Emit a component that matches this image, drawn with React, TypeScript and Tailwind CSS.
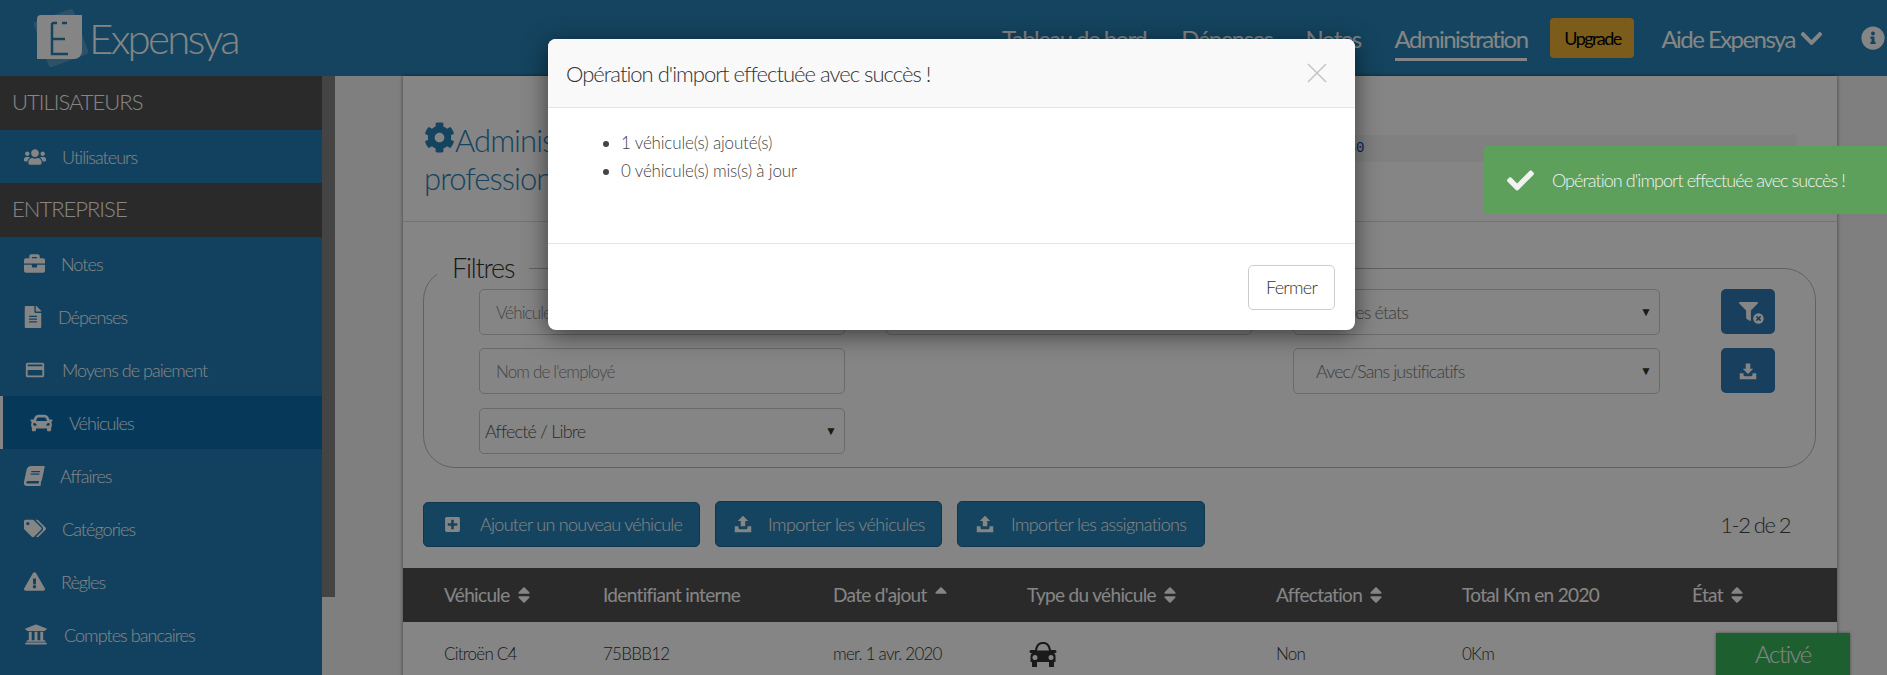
import type { ReactNode } from 'react';
import {
  FaBook, FaBriefcase, FaCar, FaCheck, FaChevronDown, FaCog, FaExclamationTriangle, FaFileAlt,
  FaFilter, FaInfoCircle, FaPlusSquare, FaSort, FaSortUp, FaTags, FaTimesCircle, FaUniversity, FaUsers,
} from 'react-icons/fa';
import { MdCreditCard } from 'react-icons/md';

function TrayIcon({ down = false, className = '' }: { down?: boolean; className?: string }) {
  return (
    <svg viewBox="0 0 24 24" className={className} fill="currentColor">
      <path d={down ? 'M9 2h6v7h4l-7 7-7-7h4z' : 'M12 1l7 7h-4v7H9V8H5z'} />
      <path d="M1 15h5v2a2 2 0 0 0 2 2h8a2 2 0 0 0 2-2v-2h5v8H1z" />
    </svg>
  );
}

function FrontCar({ className = '' }: { className?: string }) {
  return (
    <svg viewBox="0 0 30 26" className={className} fill="currentColor">
      <path fillRule="evenodd" d="M7 9C8 3.500 10.500 1 15 1s7 2.500 8 8h4a1.500 1.500 0 0 1 0 3h-1c1 1 1.500 2 1.500 3.500V21H2.500v-5.500C2.500 14 3 13 4 12H3a1.500 1.500 0 0 1 0-3zM9 9.500h12C20 5 18.500 3 15 3S10 5 9 9.500zM7 14a2.500 2.500 0 1 0 0 5 2.500 2.500 0 0 0 0-5zm16 0a2.500 2.500 0 1 0 0 5 2.500 2.500 0 0 0 0-5z" />
      <path d="M4 21h5v5H4zM21 21h5v5h-5z" />
    </svg>
  );
}

function Logo() {
  return (
    <svg viewBox="0 0 56 62" className="h-[62px] w-[56px] shrink-0">
      <rect x="7" y="7" width="42" height="48" rx="3" fill="#ffffff" opacity="0.22" transform="rotate(-20 28 31)" />
      <path d="M8 8h41v36a8 8 0 0 1-8 8H4V12a4 4 0 0 1 4-4z" fill="#ffffff" />
      <path d="M19 16v31h16M19 32h13M19 16h5M29 16h5" fill="none" stroke="#2883b7" strokeWidth="2.500" />
    </svg>
  );
}

const sideItems: { label: string; icon: ReactNode; active?: boolean }[] = [
  { label: 'Notes', icon: <FaBriefcase className="h-[21px] w-[21px]" /> },
  { label: 'Dépenses', icon: <FaFileAlt className="h-[22px] w-[18px]" /> },
  { label: 'Moyens de paiement', icon: <MdCreditCard className="h-[26px] w-[22px]" /> },
  { label: 'Véhicules', icon: <FaCar className="h-[22px] w-[23px]" />, active: true },
  { label: 'Affaires', icon: <FaBook className="h-[20px] w-[20px] -skew-x-12" /> },
  { label: 'Catégories', icon: <FaTags className="h-[21px] w-[22px]" /> },
  { label: 'Règles', icon: <FaExclamationTriangle className="h-[21px] w-[21px]" /> },
  { label: 'Comptes bancaires', icon: <FaUniversity className="h-[23px] w-[24px]" /> },
];

function SideItem({ label, icon, active }: { label: string; icon: ReactNode; active?: boolean }) {
  return (
    <div className={active
      ? 'flex h-[53px] items-center gap-[16px] border-l-[3px] border-white bg-[#0d6cad] pl-[27px]'
      : 'flex h-[53px] items-center gap-[16px] bg-[#227db7] pl-[24px]'}>
      {icon}
      <span className="pt-[2px]">{label}</span>
    </div>
  );
}

function SideHeading({ children }: { children: ReactNode }) {
  return <div className="flex h-[54px] items-center bg-[#515151] pb-[3px] pl-[12px] text-[22px] tracking-[-0.045em]">{children}</div>;
}

function SelectBox({ label, className = '' }: { label: string; className?: string }) {
  return (
    <div className={`flex h-[46px] items-center justify-between rounded-[5px] border border-[#ccc] pr-[8px] ${className}`}>
      <span>{label}</span>
      <span className="text-[12px] text-[#333]">▼</span>
    </div>
  );
}

function TextField({ placeholder }: { placeholder: string }) {
  return (
    <input
      readOnly
      placeholder={placeholder}
      className="h-[46px] w-[366px] rounded-[5px] border border-[#ccc] px-[16px] text-[17px] tracking-[-0.05em] placeholder:text-[#888]"
    />
  );
}

function ActionButton({ icon, label, className }: { icon: ReactNode; label: string; className: string }) {
  return (
    <button className={`flex items-center rounded-[5px] border border-[#1d6a97] bg-[#2883b7] text-[18px] text-white ${className}`}>
      {icon}
      <span>{label}</span>
    </button>
  );
}

const columns = [
  { label: 'Véhicule', sort: true },
  { label: 'Identifiant interne' },
  { label: "Date d'ajout", up: true },
  { label: 'Type du véhicule', sort: true },
  { label: 'Affectation', sort: true },
  { label: 'Total Km en 2020' },
  { label: 'État', sort: true },
];

const tableGrid = 'grid grid-cols-[159px_230px_194px_249px_186px_230px_1fr] pl-[41px]';

export default function App() {
  return (
    <div className="relative h-[675px] overflow-hidden bg-[#f4f4f4] font-['Lato',sans-serif] font-light tracking-[-0.06em] text-[#333]">
      {/* Top bar */}
      <header className="flex h-[76px] items-center bg-[#2883b7] pl-[33px] pr-[2px] text-[24px] text-white">
        <Logo />
        <span className="text-[42px] leading-none tracking-[-0.065em]">Expensya</span>
        <nav className="ml-auto flex items-center font-normal tracking-[-0.065em]">
          <span className="pt-[2px]">Tableau de bord</span>
          <span className="ml-[35px] pt-[2px]">Dépenses</span>
          <span className="ml-[33px] pt-[2px]">Notes</span>
          <span className="ml-[34px] border-b-[3px] border-white pb-[1px] pt-[5px]">Administration</span>
          <span className="ml-[23px] flex h-[40px] w-[84px] items-center justify-center rounded-[4px] bg-[#ebb132] text-[18px] text-black">Upgrade</span>
          <span className="ml-[27px] pt-[2px]">Aide Expensya</span>
          <FaChevronDown className="ml-[4px] h-[25px] w-[25px]" />
          <FaInfoCircle className="ml-[37px] h-[24px] w-[24px]" />
        </nav>
      </header>

      <div className="flex h-[599px]">
        {/* Sidebar */}
        <aside className="h-full w-[322px] shrink-0 bg-[#227db7] text-[18px] text-white">
          <SideHeading>UTILISATEURS</SideHeading>
          <SideItem label="Utilisateurs" icon={<FaUsers className="h-[22px] w-[22px]" />} />
          <SideHeading>ENTREPRISE</SideHeading>
          {sideItems.map(item => <SideItem key={item.label} {...item} />)}
        </aside>
        <div className="h-full w-[13px] shrink-0">
          <div className="h-[521px] bg-[#838383]" />
        </div>

        {/* Main panel */}
        <main className="ml-[68px] h-[700px] w-[1434px] shrink-0 bg-white shadow-[0_0_4px_rgba(0,0,0,0.5)]">
          <div className="flex h-[146px] border-b border-[#ddd] pr-[40px] pt-[44px]">
            <h1 className="mt-[1px] w-[560px] pl-[21px] text-[31px] leading-[38px] font-light text-[#2883b7]">
              <FaCog className="inline h-[31px] w-[31px] align-[-1px]" />
              Administration des véhicules professionnels
            </h1>
            <code className="ml-auto mt-[15px] h-[27px] w-[745px] rounded-[4px] bg-[#f5f5f5] pl-[10px] font-['Liberation_Mono',monospace] text-[14px] font-normal leading-[27px] tracking-normal text-[#0b3fb5]">
              00000000-0000-0000-0000-000000000080
            </code>
          </div>

          {/* Filters */}
          <fieldset className="ml-[20px] mt-[28px] h-[218px] w-[1393px] rounded-[32px] border border-[#bbb] pl-[55px]">
            <legend className="-ml-[42px] px-[15px] text-[27px] leading-[36px] tracking-[-0.045em] text-[#333]">Filtres</legend>
            <div className="mt-[3px] flex gap-[41px]">
              <TextField placeholder="Véhicule" />
              <TextField placeholder="Identifiant" />
              <SelectBox label="Tous les états" className="w-[367px] pl-[22px] text-[18px] tracking-[-0.05em] text-[#777]" />
              <button className="ml-[20px] flex h-[45px] w-[54px] items-center justify-center rounded-[5px] bg-[#2f7ab5] text-white">
                <span className="relative">
                  <FaFilter className="h-[19px] w-[19px]" />
                  <FaTimesCircle className="absolute -bottom-[4px] -right-[7px] h-[13px] w-[13px] rounded-full border border-[#2f7ab5]" />
                </span>
              </button>
            </div>
            <div className="mt-[13px] flex gap-[41px]">
              <TextField placeholder="Nom de l'employé" />
              <div className="w-[366px]" />
              <SelectBox label="Avec/Sans justificatifs" className="w-[367px] pl-[22px] text-[18px] tracking-[-0.05em] text-[#777]" />
              <button className="ml-[20px] flex h-[45px] w-[54px] items-center justify-center rounded-[5px] bg-[#2f7ab5] text-white">
                <TrayIcon down className="h-[18px] w-[18px]" />
              </button>
            </div>
            <SelectBox label="Affecté / Libre" className="mt-[14px] w-[366px] pl-[5px] text-[18px] tracking-[-0.045em] text-[#555]" />
          </fieldset>

          {/* Actions */}
          <div className="mt-[33px] flex h-[46px] items-center gap-[15px] pl-[20px] pr-[47px]">
            <ActionButton className="h-[45px] w-[277px] gap-[19px] pl-[20px] tracking-[-0.04em]" label="Ajouter un nouveau véhicule" icon={<FaPlusSquare className="h-[17px] w-[17px]" />} />
            <ActionButton className="h-[46px] w-[227px] gap-[16px] pl-[18px] tracking-[-0.03em]" label="Importer les véhicules" icon={<TrayIcon className="h-[18px] w-[18px]" />} />
            <ActionButton className="h-[46px] w-[248px] gap-[17px] pl-[18px] tracking-[-0.035em]" label="Importer les assignations" icon={<TrayIcon className="h-[18px] w-[18px]" />} />
            <span className="ml-auto text-[22px] tracking-[-0.07em] text-[#444]">1-2 de 2</span>
          </div>

          {/* Table */}
          <div className={`mt-[21px] h-[54px] items-center bg-[#515151] text-[19px] font-normal tracking-[-0.035em] text-white ${tableGrid}`}>
            {columns.map(c => (
              <span key={c.label} className="flex items-center gap-[7px]">
                {c.label}
                {c.sort && <FaSort className="h-[20px] w-[14px]" />}
                {c.up && <FaSortUp className="h-[20px] w-[14px]" />}
              </span>
            ))}
          </div>
          <div className={`items-start pt-[11px] text-[17px] tracking-[-0.045em] ${tableGrid}`}>
            <span className="leading-[41px]">Citroën C4</span>
            <span className="leading-[41px]">75BBB12</span>
            <span className="leading-[41px]">mer. 1 avr. 2020</span>
            <FrontCar className="ml-[1px] mt-[8px] h-[26px] w-[30px] text-[#333]" />
            <span className="leading-[41px]">Non</span>
            <span className="leading-[41px]">0Km</span>
            <span className="ml-[24px] flex h-[60px] w-[134px] justify-center bg-[#3ab75c] text-[24px] leading-[41px] tracking-[-0.06em] text-white shadow-[0_0_3px_rgba(0,0,0,0.4)]">Activé</span>
          </div>
        </main>
      </div>

      {/* Backdrop and dialog */}
      <div className="absolute inset-0 bg-black/[0.48]" />
      <div className="absolute left-[548px] top-[39px] w-[807px] overflow-hidden rounded-[8px] bg-white shadow-[0_5px_25px_rgba(0,0,0,0.55)]">
        <div className="flex h-[69px] items-center justify-between border-b border-[#e5e5e5] bg-[#f9f9f9] pl-[18px] pr-[28px]">
          <span className="text-[22px] tracking-[-0.045em]">Opération d'import effectuée avec succès !</span>
          <svg viewBox="0 0 20 20" className="h-[20px] w-[20px] text-[#c4c4c4]" fill="none" stroke="currentColor" strokeWidth="1.500">
            <path d="M1 1l18 18M19 1L1 19" />
          </svg>
        </div>
        <ul className="h-[136px] list-disc border-b border-[#e5e5e5] pl-[73px] pt-[21px] text-[17px] leading-[28px] tracking-[-0.01em] text-[#444]">
          <li>1 véhicule(s) ajouté(s)</li>
          <li>0 véhicule(s) mis(s) à jour</li>
        </ul>
        <div className="flex h-[86px] justify-end pr-[20px] pt-[21px]">
          <button className="h-[45px] w-[87px] rounded-[5px] border border-[#ccc] text-[18px] tracking-[-0.04em]">Fermer</button>
        </div>
      </div>

      {/* Toast */}
      <div className="absolute right-0 top-[146px] flex h-[68px] w-[403px] items-center gap-[15px] rounded-l-[3px] bg-[#5da05c] pl-[20px] text-[18px] tracking-[-0.052em] text-[#f2f2f2]">
        <FaCheck className="h-[27px] w-[33px]" />
        <span>Opération d'import effectuée avec succès !</span>
      </div>
    </div>
  );
}
